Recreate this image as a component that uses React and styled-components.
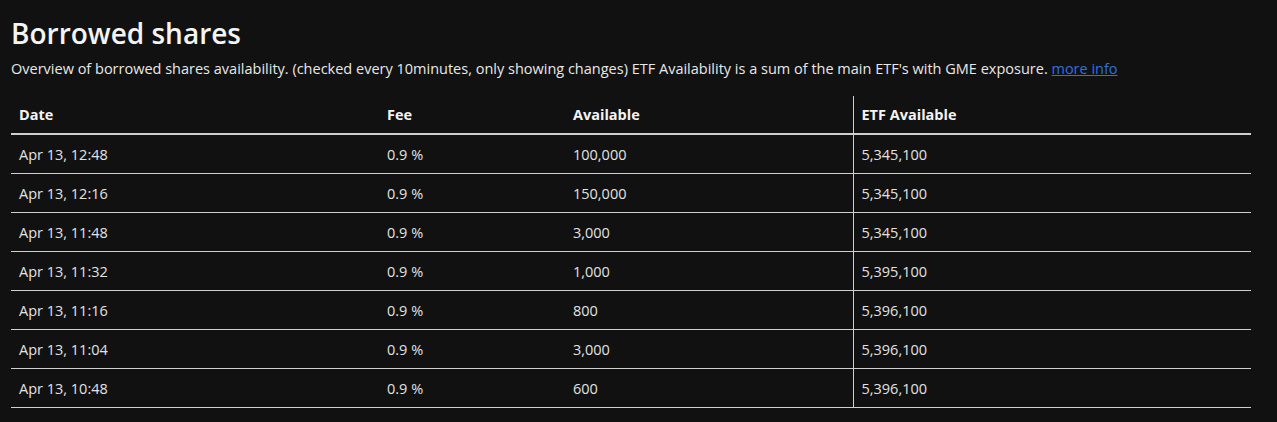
import React from "react";
import styled, { createGlobalStyle } from "styled-components";

const Global = createGlobalStyle`
  html, body { margin: 0; padding: 0; background: #111111; }
  body { font-family: "Open Sans", "Noto Sans", sans-serif; color: #e6e6e6; }
`;

const Page = styled.div`
  padding: 14px 26px 0 11px;
`;

const Title = styled.h1`
  margin: 0;
  font-size: 28px;
  font-weight: 600;
  line-height: 38px;
  color: #f4f4f4;
  letter-spacing: 0;
`;

const Intro = styled.p`
  margin: 6px 0 16px;
  font-size: 14.5px;
  line-height: 22px;
  color: #e8e8e8;
  letter-spacing: 0;
`;

const Link = styled.a`
  color: #2f6fe0;
  text-decoration: underline;
`;

const Table = styled.table`
  width: 1240px;
  border-collapse: collapse;
  table-layout: fixed;
  font-size: 14.5px;
`;

const Th = styled.th`
  text-align: left;
  font-weight: 700;
  color: #f4f4f4;
  height: 37px;
  padding: 0 8px;
  border-bottom: 2px solid #cfcfcf;
  border-left: ${(p) => (p.$divider ? "1px solid #cfcfcf" : "none")};
`;

const Td = styled.td`
  height: 38px;
  padding: 0 8px;
  color: #e2e2e2;
  border-bottom: 1px solid #cfcfcf;
  border-left: ${(p) => (p.$divider ? "1px solid #cfcfcf" : "none")};
`;

const rows = [
  ["Apr 13, 12:48", "0.9 %", "100,000", "5,345,100"],
  ["Apr 13, 12:16", "0.9 %", "150,000", "5,345,100"],
  ["Apr 13, 11:48", "0.9 %", "3,000", "5,345,100"],
  ["Apr 13, 11:32", "0.9 %", "1,000", "5,395,100"],
  ["Apr 13, 11:16", "0.9 %", "800", "5,396,100"],
  ["Apr 13, 11:04", "0.9 %", "3,000", "5,396,100"],
  ["Apr 13, 10:48", "0.9 %", "600", "5,396,100"],
];

export default function App() {
  return (
    <>
      <Global />
      <Page>
        <Title>Borrowed shares</Title>
        <Intro>
          Overview of borrowed shares availability. (checked every 10minutes, only showing changes) ETF
          Availability is a sum of the main ETF's with GME exposure. <Link href="#">more info</Link>
        </Intro>
        <Table>
          <colgroup>
            <col style={{ width: 368 }} />
            <col style={{ width: 186 }} />
            <col style={{ width: 288 }} />
            <col style={{ width: 398 }} />
          </colgroup>
          <thead>
            <tr>
              <Th>Date</Th>
              <Th>Fee</Th>
              <Th>Available</Th>
              <Th $divider>ETF Available</Th>
            </tr>
          </thead>
          <tbody>
            {rows.map((r) => (
              <tr key={r[0]}>
                <Td>{r[0]}</Td>
                <Td>{r[1]}</Td>
                <Td>{r[2]}</Td>
                <Td $divider>{r[3]}</Td>
              </tr>
            ))}
          </tbody>
        </Table>
      </Page>
    </>
  );
}
